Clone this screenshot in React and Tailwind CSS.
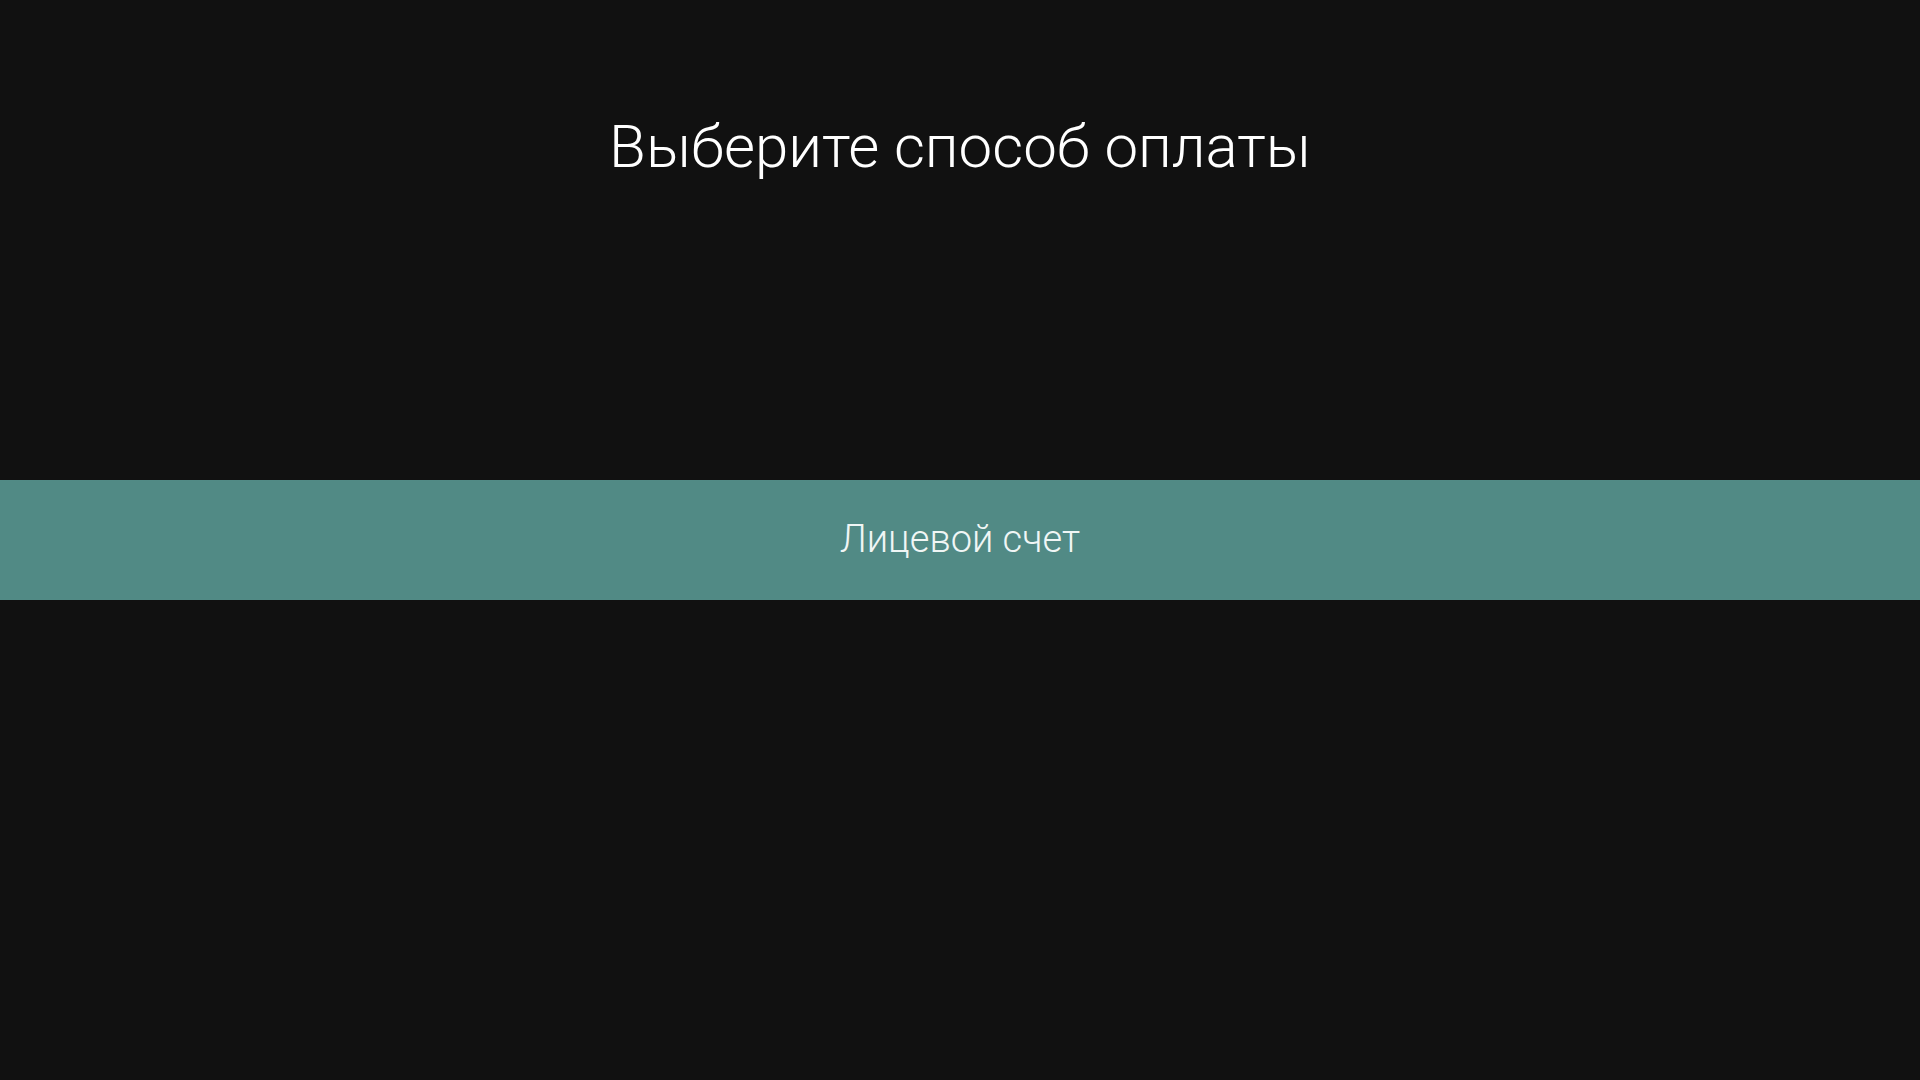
export default function App() {
  return (
    <div className="w-[1920px] h-[1080px] bg-[#111111] flex flex-col overflow-hidden" style={{ fontFamily: "Roboto, 'Noto Sans', sans-serif" }}>
      <div className="h-[480px] flex flex-col items-center">
        <h1 className="mt-[111px] text-[60px] leading-[72px] font-light text-white tracking-normal">Выберите способ оплаты</h1>
      </div>
      <div className="h-[120px] bg-[#518a85] flex items-center justify-center">
        <span className="text-[38px] leading-[44px] font-light text-[#f0f6f5] -mt-[2px]">Лицевой счет</span>
      </div>
    </div>
  );
}
